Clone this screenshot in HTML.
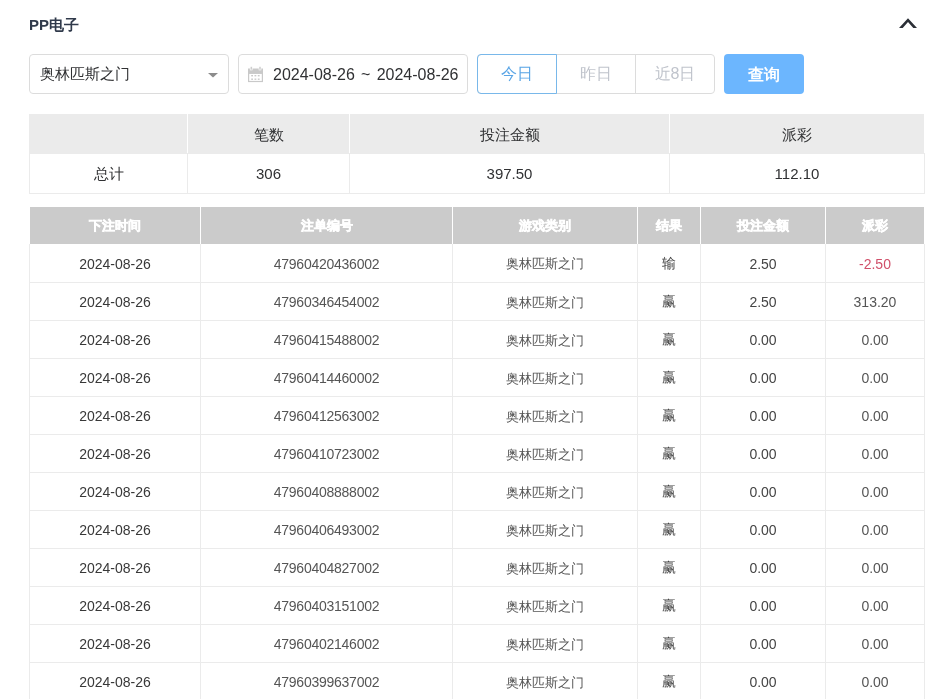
<!DOCTYPE html>
<html><head><meta charset="utf-8">
<style>
*{box-sizing:border-box;margin:0;padding:0}
html,body{width:926px;height:699px;overflow:hidden;background:#fff;font-family:"Liberation Sans",sans-serif;color:#303133}
.abs{position:absolute}
.title{left:29px;top:15px;font-size:15px;font-weight:bold;color:#303a4b;line-height:20px}
.box{border:1px solid #dcdcdc;border-radius:4px;height:40px;top:54px}
.sel{left:29px;width:200px}
.sel .t{position:absolute;left:10px;top:0;line-height:38px;font-size:15px;color:#303133}
.date{left:238px;width:230px}
.date .t{position:absolute;left:34px;top:1px;line-height:38px;word-spacing:1.8px;font-size:16px;color:#303133;white-space:nowrap}
.grp{left:477px;top:54px;height:40px;width:238px;border:1px solid #dcdcdc;border-radius:4px}
.grp div{position:absolute;top:0;height:38px;line-height:38px;text-align:center;font-size:16px;color:#c0c4cc}
.q{left:724px;top:54px;width:80px;height:40px;border-radius:4px;background:#6cb6fe;color:#fff;font-size:16px;font-weight:bold;text-align:center;line-height:41px}
table{position:absolute;border-collapse:collapse;table-layout:fixed}
td,th{text-align:center;padding:0;overflow:hidden;white-space:nowrap}
.sum{left:29px;top:114px;width:895px;font-size:15px}
.sum td{border:1px solid #ebebeb;height:40px;color:#303133}
.sum tr.h td{background:#ebebeb;border-color:#ebebeb;border-right-color:#fff;height:39px;border-top:0;padding-top:5px}
.det{left:29px;top:207px;width:895px;font-size:14px}
.det th{background:#cbcbcb;color:#fff;height:37px;font-size:13px;border-right:1px solid #fff;font-weight:bold;border-bottom:0;-webkit-text-stroke:0.5px #fff}
.det td{height:38px;border:1px solid #ebebeb;border-top:0;color:#383838;padding-top:2px}
.det td:nth-child(2){letter-spacing:-0.25px;color:#555}
.det td:nth-child(3),.det td:nth-child(6){color:#555}
.det td:nth-child(5){color:#444}
.det td.c{font-size:13px;padding-top:3px}
.det td:nth-child(4){font-size:14px;padding-top:2px;color:#444}
.red{color:#d0506a!important}
</style></head><body><div style="position:absolute;left:0;top:0;width:926px;height:699px;will-change:transform">
<div class="abs title">PP电子</div>
<svg class="abs" style="left:890px;top:10px" width="36" height="26" viewBox="0 0 36 26"><polygon points="9,18 18,8.3 27,18 23.3,18 18,12 12.7,18" fill="#2b2f36"/></svg>

<div class="abs box sel"><span class="t">奥林匹斯之门</span>
<svg style="position:absolute;left:177px;top:17px" width="12" height="6" viewBox="0 0 12 6"><polygon points="1,1 11,1 6,5.5" fill="#8c8c8c"/></svg></div>
<div class="abs box date">
<svg style="position:absolute;left:8px;top:11px" width="17" height="17" viewBox="0 0 17 17">
<rect x="1" y="2.5" width="15" height="5" fill="#c9c9c9"/>
<rect x="3.2" y="0.5" width="2" height="3.5" fill="#c9c9c9" stroke="#fff" stroke-width="0.6"/>
<rect x="12" y="0.5" width="2" height="3.5" fill="#c9c9c9" stroke="#fff" stroke-width="0.6"/>
<rect x="1.6" y="7.3" width="13.8" height="8.2" fill="none" stroke="#c9c9c9" stroke-width="1.2"/>
<rect x="4.2" y="9" width="1.8" height="1.4" fill="#c9c9c9"/><rect x="7.5" y="9" width="1.8" height="1.4" fill="#c9c9c9"/><rect x="10.8" y="9" width="1.8" height="1.4" fill="#c9c9c9"/>
<rect x="4.2" y="12.5" width="1.8" height="1.4" fill="#c9c9c9"/><rect x="7.5" y="12.5" width="1.8" height="1.4" fill="#c9c9c9"/><rect x="10.8" y="12.5" width="1.8" height="1.4" fill="#c9c9c9"/>
</svg>
<span class="t">2024-08-26 ~ 2024-08-26</span></div>
<div class="abs grp">
<div style="left:-1px;top:-1px;width:80px;height:40px;border:1px solid #79b8ea;color:#5aa5e6;line-height:38px;border-radius:4px 0 0 4px">今日</div>
<div style="left:79px;width:79px;border-right:1px solid #dcdcdc">昨日</div>
<div style="left:158px;width:78px">近8日</div>
</div>
<div class="abs q">查询</div>

<table class="sum">
<colgroup><col style="width:158px"><col style="width:162px"><col style="width:320px"><col style="width:255px"></colgroup>
<tr class="h"><td></td><td>笔数</td><td>投注金额</td><td>派彩</td></tr>
<tr><td style="padding-top:2px">总计</td><td>306</td><td>397.50</td><td>112.10</td></tr>
</table>

<table class="det">
<colgroup><col style="width:171px"><col style="width:252px"><col style="width:185px"><col style="width:63px"><col style="width:125px"><col style="width:99px"></colgroup>
<tr><th>下注时间</th><th>注单编号</th><th>游戏类别</th><th>结果</th><th>投注金额</th><th>派彩</th></tr>
<tr><td>2024-08-26</td><td>47960420436002</td><td class="c">奥林匹斯之门</td><td class="c">输</td><td>2.50</td><td class="red">-2.50</td></tr>
<tr><td>2024-08-26</td><td>47960346454002</td><td class="c">奥林匹斯之门</td><td class="c">赢</td><td>2.50</td><td>313.20</td></tr>
<tr><td>2024-08-26</td><td>47960415488002</td><td class="c">奥林匹斯之门</td><td class="c">赢</td><td>0.00</td><td>0.00</td></tr>
<tr><td>2024-08-26</td><td>47960414460002</td><td class="c">奥林匹斯之门</td><td class="c">赢</td><td>0.00</td><td>0.00</td></tr>
<tr><td>2024-08-26</td><td>47960412563002</td><td class="c">奥林匹斯之门</td><td class="c">赢</td><td>0.00</td><td>0.00</td></tr>
<tr><td>2024-08-26</td><td>47960410723002</td><td class="c">奥林匹斯之门</td><td class="c">赢</td><td>0.00</td><td>0.00</td></tr>
<tr><td>2024-08-26</td><td>47960408888002</td><td class="c">奥林匹斯之门</td><td class="c">赢</td><td>0.00</td><td>0.00</td></tr>
<tr><td>2024-08-26</td><td>47960406493002</td><td class="c">奥林匹斯之门</td><td class="c">赢</td><td>0.00</td><td>0.00</td></tr>
<tr><td>2024-08-26</td><td>47960404827002</td><td class="c">奥林匹斯之门</td><td class="c">赢</td><td>0.00</td><td>0.00</td></tr>
<tr><td>2024-08-26</td><td>47960403151002</td><td class="c">奥林匹斯之门</td><td class="c">赢</td><td>0.00</td><td>0.00</td></tr>
<tr><td>2024-08-26</td><td>47960402146002</td><td class="c">奥林匹斯之门</td><td class="c">赢</td><td>0.00</td><td>0.00</td></tr>
<tr><td>2024-08-26</td><td>47960399637002</td><td class="c">奥林匹斯之门</td><td class="c">赢</td><td>0.00</td><td>0.00</td></tr>
</table>
</div></body></html>
